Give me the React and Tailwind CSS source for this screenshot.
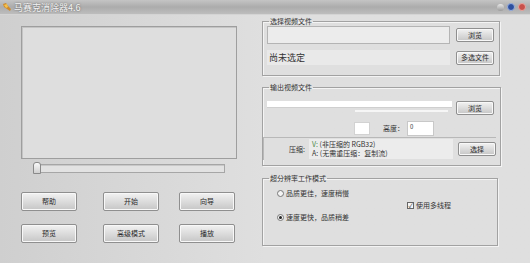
const font = { fontFamily: '"Noto Sans CJK SC", "Liberation Sans", sans-serif' };

function Btn({ children, className = '' }) {
  return (
    <div className={`flex items-center justify-center border border-[#8f8f8f] rounded-[2px] bg-gradient-to-b from-[#f2f2f2] via-[#dcdcdc] to-[#c6c6c6] shadow-[inset_0_0_0_1px_#f8f8f8] text-[7px] leading-none text-[#2a2a2a] ${className}`}>
      {children}
    </div>
  );
}

function Group({ label, className = '', children }) {
  return (
    <fieldset className={`border border-[#a2a2a2] shadow-[inset_1px_1px_0_#f4f4f4,1px_1px_0_#f4f4f4] px-[4px] ${className}`}>
      <legend className="ml-[2px] px-[1px] text-[7px] leading-none text-[#333]">{label}</legend>
      {children}
    </fieldset>
  );
}

export default function App() {
  return (
    <div className="w-[530px] h-[263px] flex flex-col bg-[#dfdfdf] overflow-hidden" style={font}>
      {/* title bar */}
      <div className="h-[15px] flex items-center bg-gradient-to-b from-[#c4c4c4] via-[#acacac] to-[#bdbdbd] border-b border-[#d4d4d4] px-[2px]">
        <svg width="10" height="10" viewBox="0 0 10 10">
          <path d="M1 2 L4 1 L6 4 L9 7 L8 9 L5 7 L2 5 Z" fill="#d08a2a" />
          <path d="M2 3 L5 2 L6 5 L4 6 Z" fill="#f4c24e" />
        </svg>
        <span className="ml-[2px] text-[9px] leading-none text-[#f4f4f4] [text-shadow:0_0_2px_#555]">马赛克消除器4.6</span>
        <div className="ml-auto flex items-center gap-[3px] pr-[2px]">
          <span className="w-[7px] h-[7px] rounded-full bg-gradient-to-b from-[#e8e8e8] to-[#9a9a9a]" />
          <span className="w-[8px] h-[8px] rounded-full bg-[#2d4f9e] border border-[#9ab0e0]" />
          <span className="w-[8px] h-[8px] rounded-full bg-[#c8504a] border border-[#eaa6a0]" />
        </div>
      </div>

      <div className="flex flex-1 bg-gradient-to-r from-[#cfcfcf] via-[#dfdfdf_5px] to-[#dfdfdf]">
        {/* left column */}
        <div className="w-[262px] pl-[21px] pt-[11px] flex flex-col">
          <div className="w-[216px] h-[133px] border border-[#9e9e9e] shadow-[inset_1px_1px_0_#c4c4c4] bg-[#dedede]" />
          <div className="relative mt-[3px] h-[12px]">
            <div className="absolute left-[14px] top-[2px] w-[190px] h-[9px] border border-[#a6a6a6] bg-[#e2e2e2] shadow-[inset_1px_1px_0_#c8c8c8]" />
            <div className="absolute left-[12px] top-0 w-[8px] h-[12px] rounded-t-[3px] border border-[#8a8a8a] bg-gradient-to-b from-[#fafafa] to-[#d0d0d0]" />
          </div>
          <div className="mt-[18px] flex">
            <Btn className="w-[56px] h-[19px]">帮助</Btn>
            <Btn className="ml-[26px] w-[56px] h-[19px]">开始</Btn>
            <Btn className="ml-[20px] w-[56px] h-[19px]">向导</Btn>
          </div>
          <div className="mt-[13px] flex">
            <Btn className="w-[56px] h-[19px]">预览</Btn>
            <Btn className="ml-[26px] w-[56px] h-[19px]">高级模式</Btn>
            <Btn className="ml-[20px] w-[56px] h-[19px]">播放</Btn>
          </div>
        </div>

        {/* right column */}
        <div className="w-[238px] pt-[3px] flex flex-col">
          <Group label="选择视频文件" className="h-[58px] pt-[1px]">
            <div className="flex items-center">
              <div className="w-[183px] h-[18px] border border-[#b4b4b4] bg-[#ececec]" />
              <Btn className="ml-[6px] w-[38px] h-[14px]">浏览</Btn>
            </div>
            <div className="mt-[6px] flex items-center">
              <div className="w-[183px] h-[15px] flex items-center pl-[2px] bg-[#e9e9e9] text-[9px] leading-none text-[#333]">尚未选定</div>
              <Btn className="ml-[6px] w-[38px] h-[14px]">多选文件</Btn>
            </div>
          </Group>

          <Group label="输出视频文件" className="mt-[8px] h-[82px] pt-[10px]">
            <div className="flex items-start">
              <div className="w-[185px] flex flex-col">
                <div className="h-[7px] bg-white border-b border-[#cfcfcf]" />
                <div className="mt-[2px] ml-[88px] w-[93px] h-[2px] bg-[#f6f6f6]" />
              </div>
              <Btn className="ml-[4px] w-[38px] h-[14px]">浏览</Btn>
            </div>
            <div className="mt-[6px] flex items-center pl-[87px]">
              <div className="w-[16px] h-[13px] bg-white border border-[#d2d2d2]" />
              <span className="ml-[13px] text-[7px] leading-none text-[#333]">高度：</span>
              <div className="ml-[3px] w-[27px] h-[15px] bg-white border border-[#c8c8c8] text-[6px] leading-none pl-[2px] pt-[2px] text-[#333]">0</div>
            </div>
            <div className="mt-[1px] -ml-[4px] flex items-center border-l border-t border-[#b8b8b8] h-[23px]">
              <div className="w-[45px] flex flex-col items-end pr-[4px]">
                <span className="text-[7px] leading-none text-[#333]">压缩:</span>
              </div>
              <div className="w-[144px] h-[20px] bg-[#ececec] flex flex-col justify-center pl-[3px] text-[7px] leading-[9px] text-[#333]">
                <span><span className="text-[#4a8a4a]">V:</span> (非压缩的 RGB32)</span>
                <span>A: (无需重压缩：复制流)</span>
              </div>
              <Btn className="ml-[5px] w-[38px] h-[14px]">选择</Btn>
            </div>
          </Group>

          <Group label="超分辨率工作模式" className="mt-[9px] h-[71px] w-[236px] pt-[8px]">
            <div className="flex">
              <div className="flex flex-col pl-[10px]">
                <div className="flex items-center">
                  <span className="w-[7px] h-[7px] rounded-full border border-[#777] bg-[#f4f4f4]" />
                  <span className="ml-[2px] text-[7px] leading-none text-[#333]">品质更佳，速度稍慢</span>
                </div>
                <div className="mt-[17px] flex items-center">
                  <span className="w-[7px] h-[7px] rounded-full border border-[#777] bg-[#f4f4f4] flex items-center justify-center">
                    <span className="w-[3px] h-[3px] rounded-full bg-[#222]" />
                  </span>
                  <span className="ml-[2px] text-[7px] leading-none text-[#333]">速度更快，品质稍差</span>
                </div>
              </div>
              <div className="ml-[58px] mt-[12px] flex items-center self-start">
                <span className="w-[7px] h-[7px] border border-[#666] bg-[#f6f6f6] flex items-center justify-center text-[6px] leading-none text-[#222]">✓</span>
                <span className="ml-[2px] text-[7px] leading-none text-[#333]">使用多线程</span>
              </div>
            </div>
          </Group>
        </div>
      </div>
    </div>
  );
}
